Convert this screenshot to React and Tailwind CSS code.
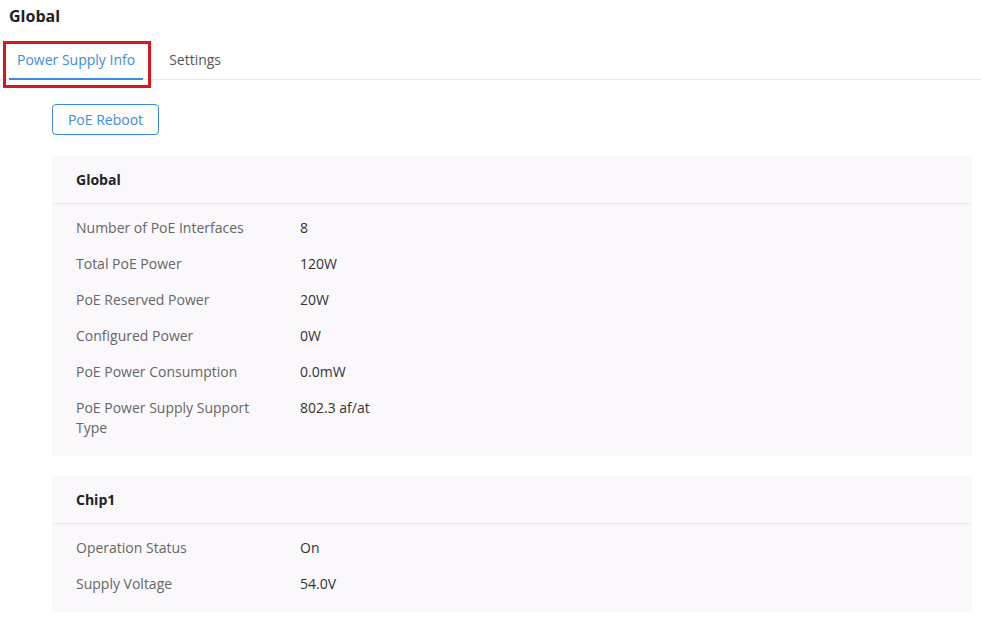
import React from 'react';

const globalRows = [
  ['Number of PoE Interfaces', '8'],
  ['Total PoE Power', '120W'],
  ['PoE Reserved Power', '20W'],
  ['Configured Power', '0W'],
  ['PoE Power Consumption', '0.0mW'],
  ['PoE Power Supply Support Type', '802.3 af/at'],
];

const chipRows = [
  ['Operation Status', 'On'],
  ['Supply Voltage', '54.0V'],
];

function InfoCard({ title, rows }) {
  return (
    <div className="bg-[#faf8fb]">
      <div className="h-[48px] flex items-center px-6 border-b border-[#ebe7ee] text-sm font-bold text-[#222]">
        {title}
      </div>
      <div className="pt-[14px] pb-[18px] px-6 flex flex-col gap-4">
        {rows.map(([label, value]) => (
          <div key={label} className="grid grid-cols-[200px_1fr] gap-x-6 text-sm leading-5">
            <div className="text-[#666]">{label}</div>
            <div className="text-[#333]">{value}</div>
          </div>
        ))}
      </div>
    </div>
  );
}

export default function App() {
  return (
    <div className="min-h-screen bg-white font-['Open_Sans',sans-serif]">
      <div className="pl-[9px] pt-[5px] h-[22px] text-base font-bold text-[#222] leading-[22px] box-content">
        Global
      </div>

      {/* tabs */}
      <div className="mt-[15px] flex items-end gap-[18px] pl-[9px] border-b border-[#eceaee]">
        <div className="relative h-[37px] px-2 pb-[2px] flex items-center text-sm text-[#3d8be0] border-b-2 border-[#3d8be0] -mb-px">
          Power Supply Info
          <div className="absolute left-[-6px] right-[-8px] top-[-2px] bottom-[-10px] border-[3px] border-[#d9161c]" />
        </div>
        <div className="h-[37px] px-2 pb-[2px] flex items-center text-sm text-[#555]">Settings</div>
      </div>

      <div className="pl-[52px] pr-[9px]">
        <button className="mt-[24px] h-[31px] w-[107px] border border-[#3d8be0] rounded-sm text-sm text-[#3d8be0] bg-white">
          PoE Reboot
        </button>

        <div className="mt-[21px] flex flex-col gap-5">
          <InfoCard title="Global" rows={globalRows} />
          <InfoCard title="Chip1" rows={chipRows} />
        </div>
      </div>
    </div>
  );
}
